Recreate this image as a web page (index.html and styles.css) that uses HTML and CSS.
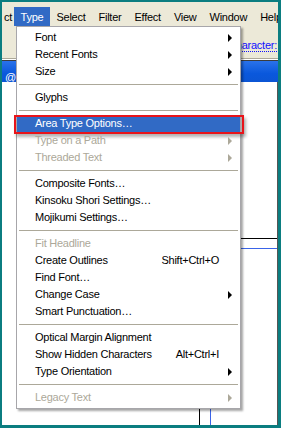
FILE: index.html
```html
<!DOCTYPE html>
<html lang="en">

<head>
    <meta charset="UTF-8">
    <meta name="viewport" content="width=device-width, initial-scale=1.0">
    <title>Type menu</title>
    <link rel="stylesheet" href="styles.css">
</head>

<body>
    <div class="window">
        <div class="menubar">
            <span class="cut">ct</span>
            <span class="open">Type</span>
            <span>Select</span>
            <span>Filter</span>
            <span>Effect</span>
            <span>View</span>
            <span>Window</span>
            <span>Help</span>
        </div>
        <div class="toolbar">
            <a class="link">Character:</a>
        </div>
        <div class="doc-bar"><span>@</span></div>
        <div class="canvas">
            <div class="guide h black" style="top: 156px;"></div>
            <div class="guide h blue" style="top: 166px;"></div>
            <div class="guide v black" style="left: 197px;"></div>
            <div class="guide v blue" style="left: 208px;"></div>
        </div>
    </div>

    <div class="menu">
        <div class="item"><span class="label">Font</span><span class="arrow"></span></div>
        <div class="item"><span class="label">Recent Fonts</span><span class="arrow"></span></div>
        <div class="item"><span class="label">Size</span><span class="arrow"></span></div>
        <div class="sep"></div>
        <div class="item"><span class="label">Glyphs</span></div>
        <div class="sep"></div>
        <div class="item active"><span class="label">Area Type Options…</span></div>
        <div class="item off"><span class="label">Type on a Path</span><span class="arrow"></span></div>
        <div class="item off"><span class="label">Threaded Text</span><span class="arrow"></span></div>
        <div class="sep"></div>
        <div class="item"><span class="label">Composite Fonts…</span></div>
        <div class="item"><span class="label">Kinsoku Shori Settings…</span></div>
        <div class="item"><span class="label">Mojikumi Settings…</span></div>
        <div class="sep"></div>
        <div class="item off"><span class="label">Fit Headline</span></div>
        <div class="item"><span class="label">Create Outlines</span><span class="key">Shift+Ctrl+O</span></div>
        <div class="item"><span class="label">Find Font…</span></div>
        <div class="item"><span class="label">Change Case</span><span class="arrow"></span></div>
        <div class="item"><span class="label">Smart Punctuation…</span></div>
        <div class="sep"></div>
        <div class="item"><span class="label">Optical Margin Alignment</span></div>
        <div class="item"><span class="label">Show Hidden Characters</span><span class="key">Alt+Ctrl+I</span></div>
        <div class="item"><span class="label">Type Orientation</span><span class="arrow"></span></div>
        <div class="sep"></div>
        <div class="item off"><span class="label">Legacy Text</span><span class="arrow"></span></div>
    </div>
</body>

</html>
```

FILE: styles.css
```css
body {
    margin: 0;
    background-color: #0b7d80;
    font-family: "Liberation Sans", Arial, sans-serif;
    font-size: 11px;
    letter-spacing: -0.25px;
    color: #000;
}

.window {
    margin: 2px 3px 3px 2px;
    height: 423px;
    display: flex;
    flex-direction: column;
    background-color: #ece9d8;
    overflow: hidden;
}

.menubar {
    height: 24px;
    display: flex;
    align-items: flex-end;
    white-space: nowrap;
}

.menubar span {
    height: 19px;
    line-height: 20px;
    padding: 0 6.5px;
}

.menubar .cut {
    padding: 0 2px 0 2px;
}

.menubar .open {
    background-color: #316ac5;
    color: #fff;
}

.toolbar {
    height: 33px;
    display: flex;
    align-items: center;
    justify-content: flex-end;
    padding-right: 1px;
    padding-top: 7px;
    box-sizing: border-box;
    border-bottom: 1px solid #aca899;
    box-shadow: 0 1px 0 #fff;
    margin-bottom: 1px;
}

.link {
    color: #1010ff;
    border-bottom: 1px dotted #1010ff;
    line-height: 12px;
}

.doc-bar {
    height: 21px;
    border-top: 1px solid #3c3c3c;
    background: linear-gradient(#2a72ea, #0a58dc 60%, #0b55d4);
    color: #fff;
    display: flex;
    align-items: flex-end;
    padding-left: 3px;
    line-height: 10px;
}

.canvas {
    flex: 1;
    position: relative;
    background-color: #fff;
    border-right: 1px solid #555;
}

.guide {
    position: absolute;
}

.guide.h {
    left: 150px;
    right: 0;
    height: 1px;
}

.guide.v {
    top: 156px;
    bottom: 0;
    width: 1px;
}

.black {
    background-color: #000;
}

.blue {
    background-color: #3a64e8;
}

.menu {
    position: absolute;
    left: 16px;
    top: 26px;
    width: 225px;
    box-sizing: border-box;
    padding: 2px 0;
    background-color: #fff;
    border: 1px solid #a7a6aa;
    box-shadow: 2px 2px 2px rgba(0, 0, 0, 0.35);
    white-space: nowrap;
}

.item {
    position: relative;
    height: 17px;
    line-height: 17px;
    display: flex;
    align-items: center;
    padding: 0 8px 0 18px;
}

.label {
    flex: 1;
}

.key {
    margin-right: 13px;
}

.arrow {
    width: 0;
    height: 0;
    border-left: 4px solid #000;
    border-top: 4px solid transparent;
    border-bottom: 4px solid transparent;
}

.off {
    color: #aca899;
}

.off .arrow {
    border-left-color: #aca899;
}

.active {
    background-color: #316ac5;
    color: #fff;
}

.active::after {
    content: "";
    position: absolute;
    left: -3px;
    right: -4px;
    top: 0;
    bottom: -2px;
    border: 2px solid #e8141a;
    box-shadow: 2px 3px 3px rgba(0, 0, 0, 0.3);
}

.sep {
    height: 9px;
    padding-top: 4px;
    box-sizing: border-box;
}

.sep::before {
    content: "";
    display: block;
    height: 1px;
    margin: 0 2px;
    background-color: #aca899;
}
```
